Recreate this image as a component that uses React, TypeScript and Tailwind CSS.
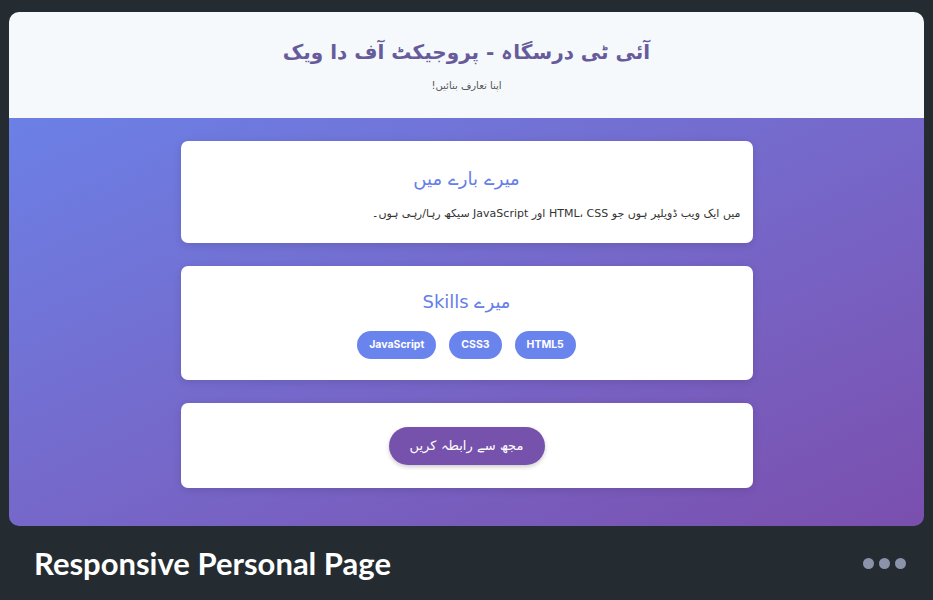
export default function App() {
  const skills = ["JavaScript", "CSS3", "HTML5"];
  return (
    <div className="w-[933px] h-[600px] bg-[#252c31] flex flex-col font-['Lato','Liberation_Sans',sans-serif]">
      <div className="mx-[9px] mt-[12px] h-[514px] rounded-[10px] overflow-hidden flex flex-col">
        <div
          dir="rtl"
          className="h-[106px] bg-[#f5f9fc] flex flex-col items-center justify-center gap-[19px] pt-[2px] font-['DejaVu_Sans',sans-serif]"
        >
          <h1 className="text-[20px] font-bold text-[#675b9c] leading-none">آئی ٹی درسگاہ - پروجیکٹ آف دا ویک</h1>
          <p className="text-[10px] text-[#555] leading-none">اپنا تعارف بنائیں!</p>
        </div>
        <div
          dir="rtl"
          className="flex-1 bg-gradient-to-br from-[#6b80e6] to-[#7a4fae] pt-[23px] flex flex-col items-center gap-[23px] font-['DejaVu_Sans',sans-serif]"
        >
          <div className="w-[572px] h-[102px] bg-white rounded-[7px] shadow-[0_2px_8px_rgba(0,0,0,0.12)] px-[12px] pt-[4px] flex flex-col items-center justify-center gap-[20px]">
            <h2 className="text-[18px] text-[#667eea] leading-none">میرے بارے میں</h2>
            <p className="self-stretch text-[11px] text-[#333] leading-none">
              میں ایک ویب ڈویلپر ہوں جو HTML، CSS اور JavaScript سیکھ رہا/رہی ہوں۔
            </p>
          </div>
          <div className="w-[572px] h-[114px] bg-white rounded-[7px] shadow-[0_2px_8px_rgba(0,0,0,0.12)] pt-[6px] flex flex-col items-center justify-center gap-[20px]">
            <h2 className="text-[18px] text-[#667eea] leading-none">میرے Skills</h2>
            <div dir="ltr" className="flex gap-[13px]">
              {skills.map((s) => (
                <span
                  key={s}
                  className="h-[28px] px-[12px] rounded-full bg-[#6a84ee] text-white text-[10.5px] font-bold flex items-center font-['Inter',sans-serif]"
                >
                  {s}
                </span>
              ))}
            </div>
          </div>
          <div className="w-[572px] h-[85px] bg-white rounded-[7px] shadow-[0_2px_8px_rgba(0,0,0,0.12)] flex items-center justify-center">
            <button className="w-[156px] h-[38px] rounded-full bg-[#7752ad] text-white text-[13px] shadow-[0_2px_4px_rgba(0,0,0,0.2)]">
              مجھ سے رابطہ کریں
            </button>
          </div>
        </div>
      </div>
      <div className="flex-1 flex items-center justify-between pl-[34px] pr-[27px]">
        <h3 className="text-[31px] font-bold text-white leading-none">Responsive Personal Page</h3>
        <div className="flex gap-[5px]">
          <span className="w-[11px] h-[11px] rounded-full bg-[#8a93aa]" />
          <span className="w-[11px] h-[11px] rounded-full bg-[#8a93aa]" />
          <span className="w-[11px] h-[11px] rounded-full bg-[#8a93aa]" />
        </div>
      </div>
    </div>
  );
}
